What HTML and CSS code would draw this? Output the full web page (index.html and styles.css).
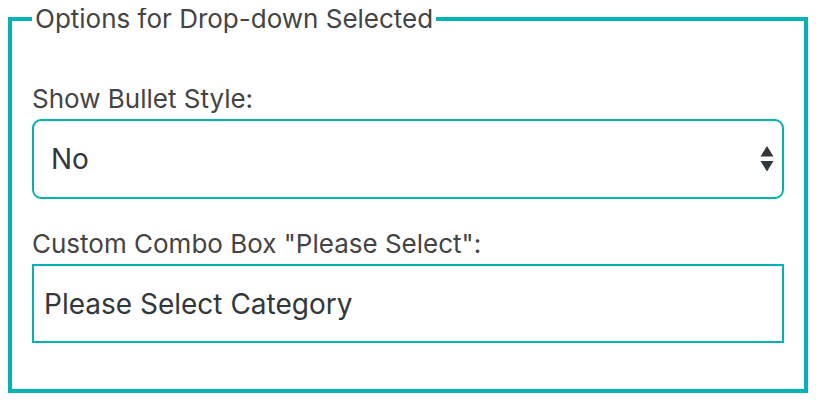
FILE: index.html
```html
<!DOCTYPE html>
<html>
<head>
<meta charset="utf-8">
<link rel="stylesheet" href="styles.css">
</head>
<body>
<fieldset class="options">
  <legend class="options-legend">Options for Drop-down Selected</legend>
  <div class="field">
    <label class="field-label" for="bullet">Show Bullet Style:</label>
    <div class="select-wrap">
      <select id="bullet" class="select">
        <option>No</option>
        <option>Yes</option>
      </select>
      <svg class="select-arrows" width="14" height="26" viewBox="0 0 14 26" aria-hidden="true">
        <path d="M7 0 L13.5 10.5 L0.5 10.5 Z" fill="#32373c"/>
        <path d="M0.5 15 L13.5 15 L7 25.5 Z" fill="#32373c"/>
      </svg>
    </div>
  </div>
  <div class="field">
    <label class="field-label" for="combo">Custom Combo Box "Please Select":</label>
    <input id="combo" class="text-input" type="text" value="Please Select Category">
  </div>
</fieldset>
</body>
</html>
```

FILE: styles.css
```css
html, body {
  background: #ffffff;
}

body {
  margin: 8px;
  font-family: Inter, "Liberation Sans", Arial, sans-serif;
}

.options {
  margin: 0;
  border: 4px solid #02b3b3;
  padding: 0 20px 46px;
  min-width: 0;
}

.options-legend {
  padding: 0 3px;
  font-size: 26px;
  line-height: 22px;
  color: #444444;
}

.field {
  display: flex;
  flex-direction: column;
  gap: 2px;
}

.field:first-of-type {
  margin-top: 51px;
}

.field + .field {
  margin-top: 27px;
}

.field-label {
  font-size: 26px;
  line-height: 36px;
  color: #444444;
}

.select-wrap {
  position: relative;
}

.select {
  appearance: none;
  -webkit-appearance: none;
  display: block;
  width: 100%;
  height: 80px;
  margin: 0;
  border: 2px solid #02b3b3;
  border-radius: 9px;
  padding: 0 40px 0 17px;
  background: #ffffff;
  font-family: Inter, "Liberation Sans", Arial, sans-serif;
  font-size: 28px;
  color: #32373c;
  box-shadow: inset 0 1px 2px rgba(0, 0, 0, 0.07);
  outline: none;
}

.select-arrows {
  position: absolute;
  right: 10px;
  top: 27px;
  pointer-events: none;
}

.text-input {
  display: block;
  width: 100%;
  height: 79px;
  margin: 0;
  border: 2px solid #02b3b3;
  border-radius: 0;
  padding: 0 10px;
  background: #ffffff;
  font-family: Inter, "Liberation Sans", Arial, sans-serif;
  font-size: 28px;
  color: #32373c;
  box-sizing: border-box;
  box-shadow: inset 0 1px 2px rgba(0, 0, 0, 0.07);
  outline: none;
}
```
